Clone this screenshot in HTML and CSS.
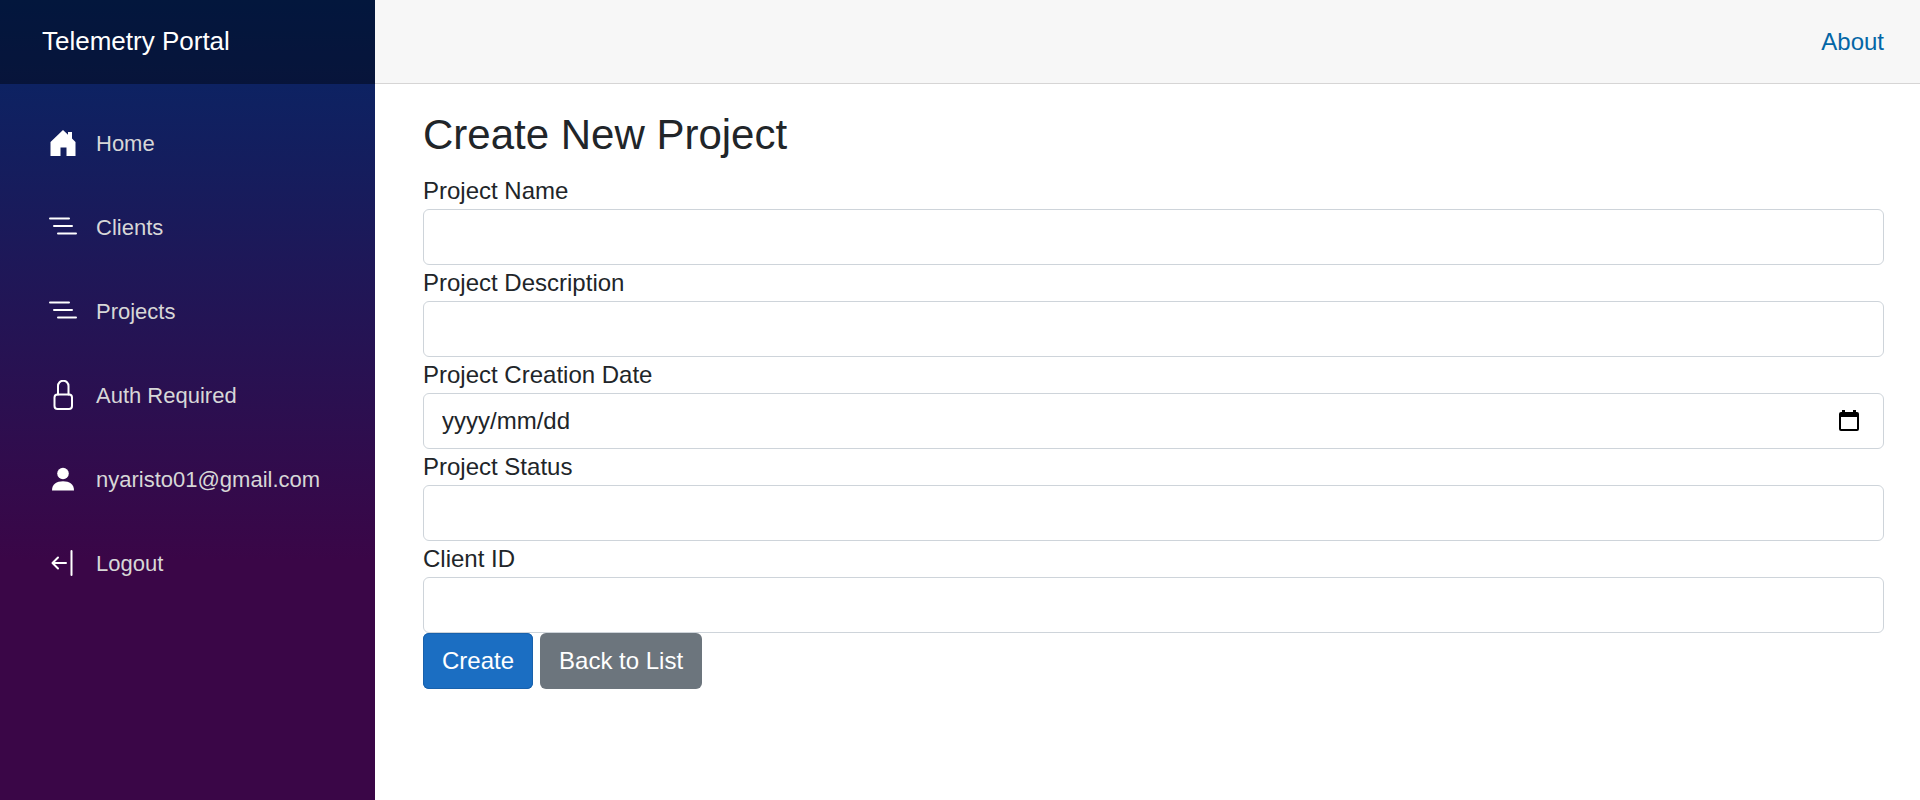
FILE: index.html
```html
<!DOCTYPE html>
<html lang="en">
<head>
<meta charset="utf-8">
<title>Create New Project</title>
<link rel="stylesheet" href="styles.css">
</head>
<body>
<div class="page">
  <div class="sidebar">
    <div class="brand-row"><a class="brand" href="#">Telemetry Portal</a></div>
    <nav class="nav">
      <a class="nav-link" href="#"><svg class="icon" viewBox="0 0 30 32"><path fill="currentColor" d="M15 2l5 4.700V4h4v6.500l3.500 3.500v14h-9v-8.500h-6V28h-10V14z"/></svg>Home</a>
      <a class="nav-link" href="#"><svg class="icon" viewBox="0 0 30 32"><path class="line" d="M2 6.500h19M6 14h18M10 21.500h18"/></svg>Clients</a>
      <a class="nav-link" href="#"><svg class="icon" viewBox="0 0 30 32"><path class="line" d="M2 6.500h19M6 14h18M10 21.500h18"/></svg>Projects</a>
      <a class="nav-link" href="#"><svg class="icon" viewBox="0 0 30 32"><rect class="line" x="6.500" y="14.500" width="17.500" height="14.500" rx="3"/><path class="line" d="M10 14.500V6a5.200 5.200 0 0 1 10.500 0v8.500"/></svg>Auth Required</a>
      <a class="nav-link" href="#"><svg class="icon" viewBox="0 0 30 32"><circle fill="currentColor" cx="15" cy="9.500" r="5.800"/><path fill="currentColor" d="M4 26.500C4 20 8.500 17.200 15 17.200S26 20 26 26.500z"/></svg>nyaristo01@gmail.com</a>
      <a class="nav-link" href="#"><svg class="icon" viewBox="0 0 30 32"><path class="line" d="M18 15H5M10 9.500L4.500 15l5.500 5.500M23.500 3v24"/></svg>Logout</a>
    </nav>
  </div>
  <main class="main">
    <div class="top-row"><a class="about" href="#">About</a></div>
    <form class="content">
      <h1 class="title">Create New Project</h1>
      <label class="label" for="name">Project Name</label>
      <input class="control" id="name" type="text">
      <label class="label" for="description">Project Description</label>
      <input class="control" id="description" type="text">
      <label class="label" for="date">Project Creation Date</label>
      <div class="control date">
        <input class="date-input" id="date" type="text" placeholder="yyyy/mm/dd">
        <button class="date-button" type="button" aria-label="Choose date"><svg class="calendar" viewBox="0 0 20 22"><path fill="currentColor" fill-rule="evenodd" d="M3 0h3v2h8V0h3v2h1a2 2 0 0 1 2 2v15a2 2 0 0 1-2 2H2a2 2 0 0 1-2-2V4a2 2 0 0 1 2-2h1zM2 7v12h16V7z"/></svg></button>
      </div>
      <label class="label" for="status">Project Status</label>
      <input class="control" id="status" type="text">
      <label class="label" for="client">Client ID</label>
      <input class="control" id="client" type="text">
      <div class="actions">
        <button class="button primary" type="submit">Create</button>
        <button class="button secondary" type="button">Back to List</button>
      </div>
    </form>
  </main>
</div>
</body>
</html>
```
FILE: styles.css
```css
* { box-sizing: border-box; }

body {
  margin: 0;
  font-family: "Liberation Sans", Arial, sans-serif;
  font-size: 24px;
  line-height: 36px;
  color: #212529;
  background: #fff;
}

a { text-decoration: none; }

.page { display: flex; min-height: 100vh; }

.sidebar {
  flex: 0 0 375px;
  background: linear-gradient(180deg, rgb(5, 39, 103) 0%, #3a0647 70%);
}

.brand-row {
  display: flex;
  align-items: center;
  height: 84px;
  padding: 0 42px;
  padding-bottom: 2px;
  background: rgba(0, 0, 0, 0.4);
}

.brand { font-size: 26px; color: #fff; }

.nav {
  display: flex;
  flex-direction: column;
  gap: 12px;
  padding: 24px;
}

.nav-link {
  display: flex;
  align-items: center;
  gap: 18px;
  height: 72px;
  padding: 0 24px;
  font-size: 22px;
  color: #d7d7d7;
}

.icon { width: 30px; height: 32px; color: #fff; }

.line {
  fill: none;
  stroke: currentColor;
  stroke-width: 2;
  stroke-linecap: round;
  stroke-linejoin: round;
}

.main { flex: 1; min-width: 0; }

.top-row {
  display: flex;
  align-items: center;
  justify-content: flex-end;
  height: 84px;
  padding: 0 36px;
  background: #f7f7f7;
  border-bottom: 1px solid #d6d5d5;
}

.about { color: #0366a6; }

.content { padding: 26px 36px 0 48px; }

.title {
  margin: 0 0 13px;
  font-size: 42px;
  font-weight: 400;
  line-height: 50px;
}

.label { display: block; }

.control {
  display: block;
  width: 100%;
  height: 56px;
  padding: 9px 18px;
  font: inherit;
  color: inherit;
  background: #fff;
  border: 1px solid #ced4da;
  border-radius: 6px;
}

.date { display: flex; align-items: center; padding-right: 24px; }

.date-input {
  flex: 1;
  min-width: 0;
  padding: 0;
  font: inherit;
  color: inherit;
  background: none;
  border: 0;
}

.date-input::placeholder { color: #212529; opacity: 1; }

.date-button {
  display: flex;
  padding: 0;
  color: #000;
  background: none;
  border: 0;
}

.calendar { width: 20px; height: 22px; }

.actions { display: flex; gap: 7px; }

.button {
  height: 56px;
  padding: 0 19px;
  font: inherit;
  color: #fff;
  border: 0;
  border-radius: 6px;
}

.primary { background: #1b6ec2; box-shadow: inset 0 0 0 1px #1861ac; }
.secondary { background: #6c757d; }
```
